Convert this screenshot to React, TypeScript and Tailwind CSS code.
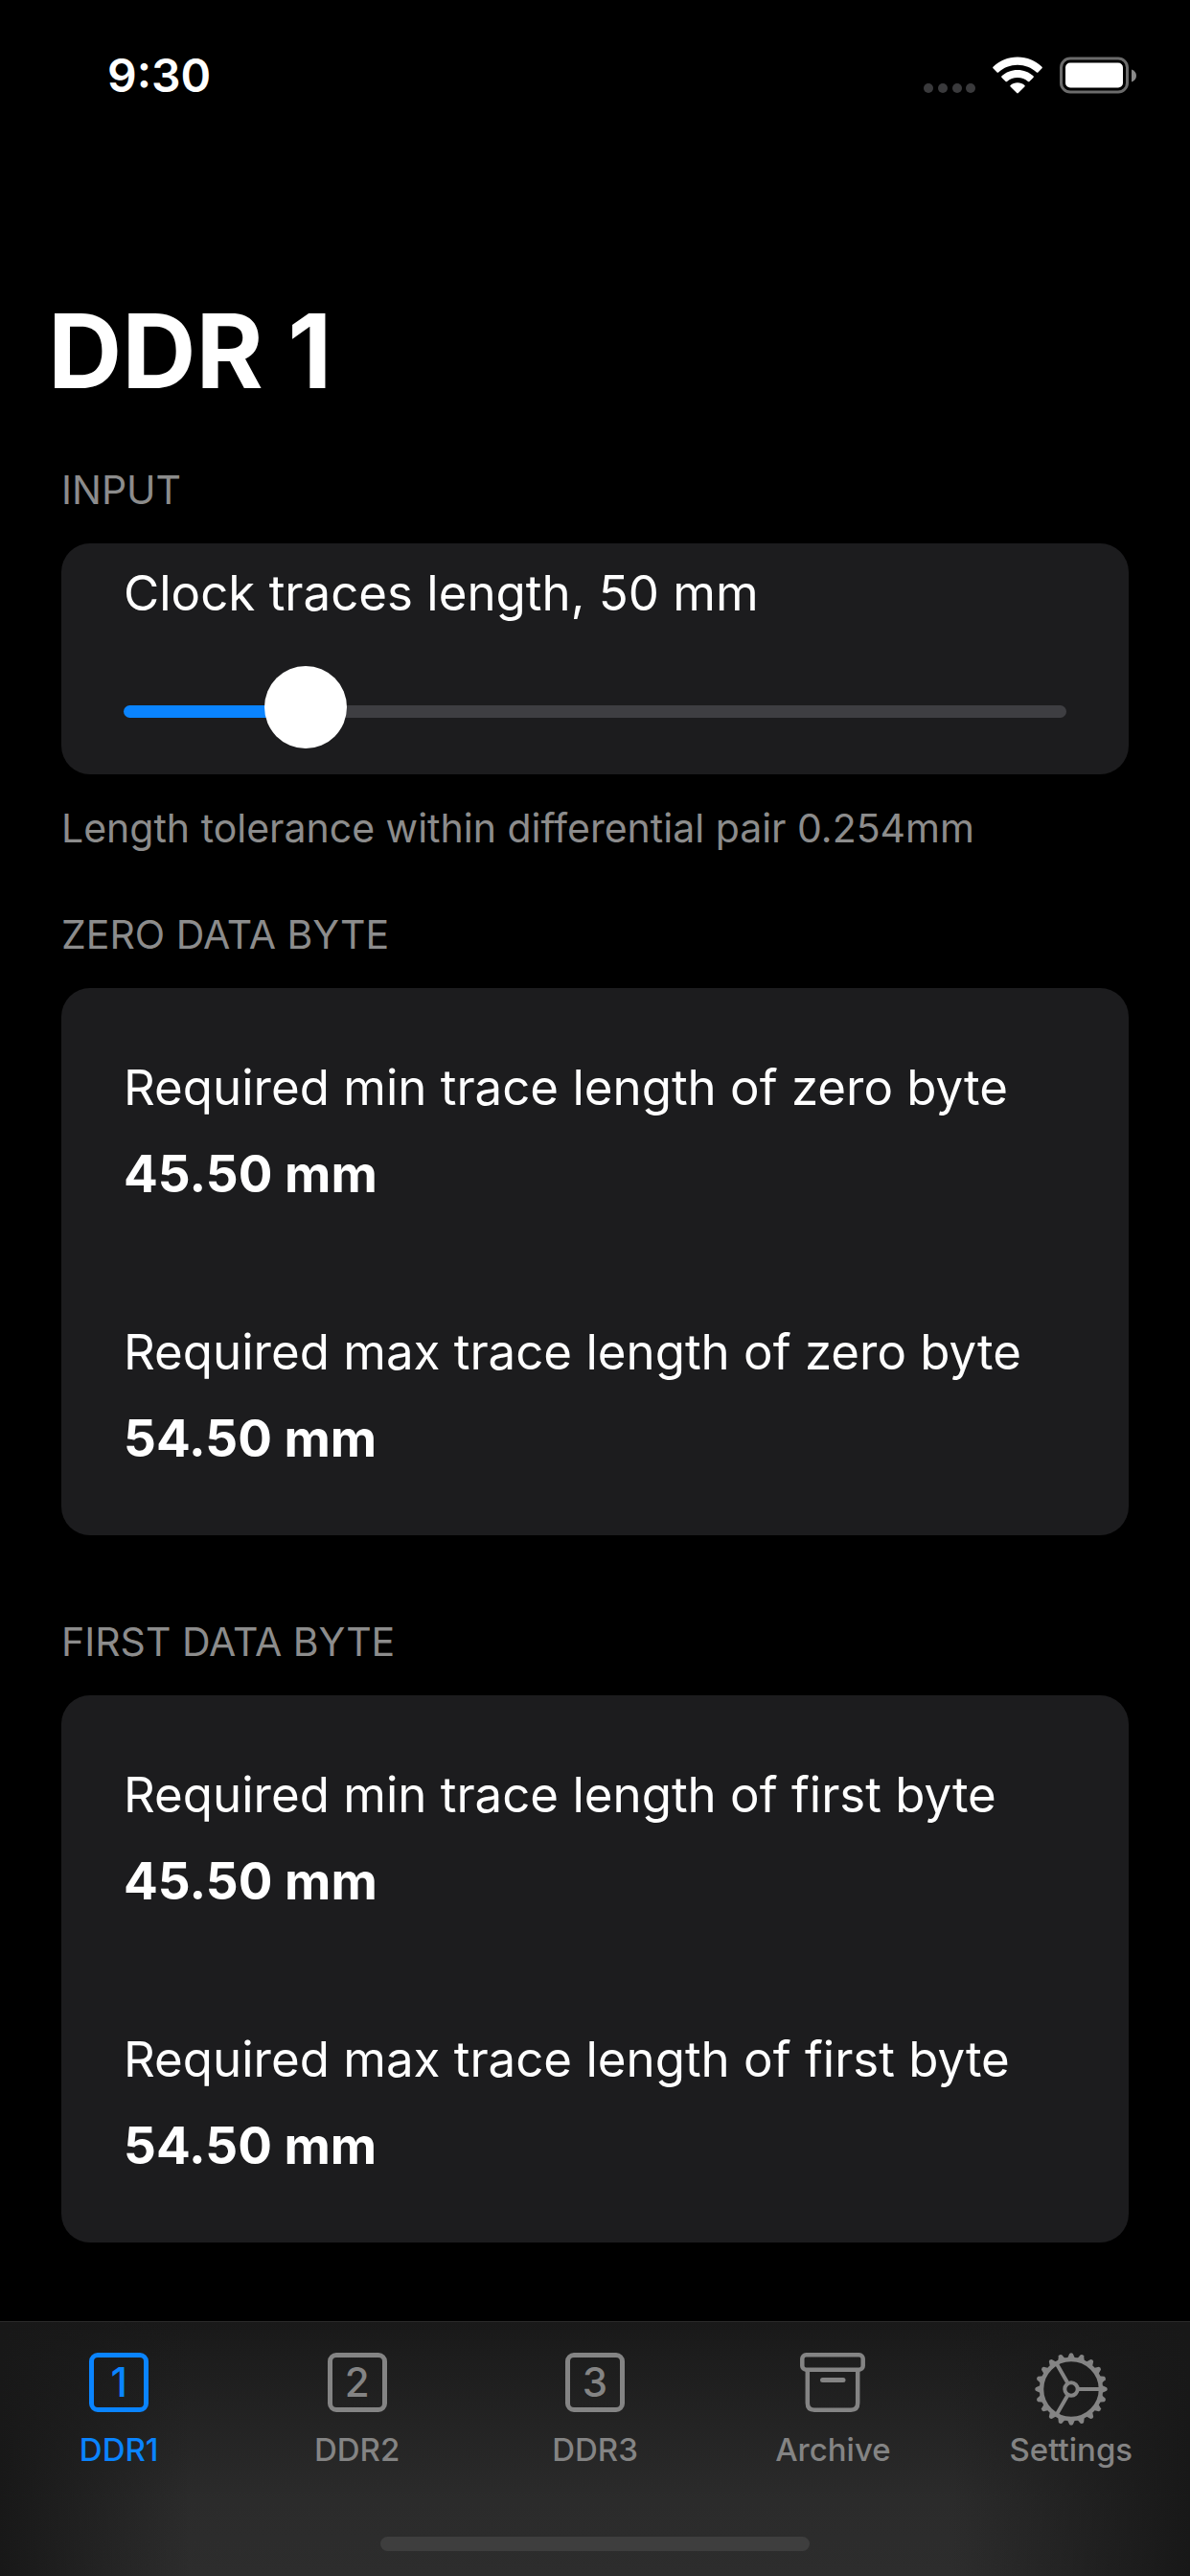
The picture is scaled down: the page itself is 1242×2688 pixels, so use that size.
import { useState, type CSSProperties, type ReactNode } from 'react';

type TabId = 'ddr1' | 'ddr2' | 'ddr3' | 'archive' | 'settings';
type Row = { label: string; value: number };

// ---- trace limits (mm) ----
const MIN_LENGTH = 1;
const MAX_LENGTH = 300;
const BYTE_TOLERANCE = 4.5;
const PAIR_TOLERANCE = 0.254;

const mm = (n: number) => `${n.toFixed(2)} mm`;

// ---------- Status bar ----------
function StatusBar() {
  return (
    <header className="flex h-[158px] items-center justify-between pl-28 pr-14">
      <time className="text-[48px] leading-[60px] font-semibold">9:30</time>
      <div className="flex items-center gap-[18px]">
        <svg className="h-10 w-14" viewBox="0 0 56 40" fill="#3a3a3c" aria-hidden="true">
          <circle cx="7" cy="33" r="5" />
          <circle cx="22" cy="33" r="5" />
          <circle cx="37" cy="33" r="5" />
          <circle cx="51" cy="33" r="5" />
        </svg>
        <svg className="h-10 w-[52px]" viewBox="0 0 52 40" fill="#fff" aria-hidden="true">
          <path d="M26 0.5C36 0.5 45 4.3 51.5 10.7Q52.2 11.5 51.5 12.3L47.4 16.4Q46.7 17.1 45.9 16.4C40.5 11.5 33.5 8.7 26 8.7S11.5 11.5 6.1 16.4Q5.3 17.1 4.6 16.4L0.5 12.3Q-0.2 11.5 0.5 10.7C7 4.3 16 0.5 26 0.5Z" />
          <path d="M26 14C32.4 14 38.2 16.4 42.5 20.3Q43.3 21.1 42.5 21.9L38.4 26Q37.7 26.7 36.9 26C34 23.5 30.2 22 26 22S18 23.5 15.1 26Q14.3 26.7 13.6 26L9.5 21.9Q8.7 21.1 9.5 20.3C13.8 16.4 19.6 14 26 14Z" />
          <path d="M26 27.3C28.8 27.3 31.4 28.3 33.4 29.9Q34.2 30.7 33.4 31.5L26.8 38.1Q26 38.9 25.2 38.1L18.6 31.5Q17.8 30.7 18.6 29.9C20.6 28.3 23.2 27.3 26 27.3Z" />
        </svg>
        <svg className="h-10 w-20" viewBox="0 0 80 40" aria-hidden="true">
          <rect x="1.5" y="2" width="69" height="35" rx="9.5" fill="none" stroke="#6b6b6b" strokeWidth="3" />
          <rect x="6" y="6.5" width="60" height="26" rx="5" fill="#fff" />
          <path d="M75 13.5C78 14.5 80 17 80 20S78 25.5 75 26.5Z" fill="#8a8a8a" />
        </svg>
      </div>
    </header>
  );
}

// ---------- Cards ----------
function Section({ title, footer, children }: { title: string; footer?: string; children: ReactNode }) {
  return (
    <section>
      <h2 className="text-[41px] leading-10 text-[#8c8c8c] uppercase">{title}</h2>
      <div className="mt-9 rounded-[30px] bg-[#1c1c1e] px-[65px]">{children}</div>
      {footer && <p className="mt-9 text-[41px] leading-10 text-[#8c8c8c]">{footer}</p>}
    </section>
  );
}

function Results({ rows }: { rows: Row[] }) {
  return (
    <dl className="flex flex-col gap-[126px] pt-[74px] pb-[71px]">
      {rows.map(r => (
        <div key={r.label} className="flex flex-col gap-[30px]">
          <dt className="text-[51px] leading-[60px]">{r.label}</dt>
          <dd className="text-[53px] leading-[60px] font-bold">{mm(r.value)}</dd>
        </div>
      ))}
    </dl>
  );
}

function LengthSlider({ value, onChange }: { value: number; onChange: (n: number) => void }) {
  const fill = ((value - MIN_LENGTH) / (MAX_LENGTH - MIN_LENGTH)) * 100;
  return (
    <div className="pt-[22px] pb-[23px]">
      <label htmlFor="clock-length" className="block text-[51px] leading-[60px]">
        Clock traces length, {value} mm
      </label>
      <input
        id="clock-length"
        type="range"
        min={MIN_LENGTH}
        max={MAX_LENGTH}
        value={value}
        onChange={e => onChange(Number(e.target.value))}
        style={{ '--fill': `${fill}%` } as CSSProperties}
        className="mt-[50px] block h-[86px] w-full cursor-pointer appearance-none bg-transparent [&::-webkit-slider-runnable-track]:h-[13px] [&::-webkit-slider-runnable-track]:rounded-full [&::-webkit-slider-runnable-track]:bg-[linear-gradient(to_right,#0a84ff_var(--fill),#3e3e42_var(--fill))] [&::-webkit-slider-thumb]:-mt-[41px] [&::-webkit-slider-thumb]:size-[86px] [&::-webkit-slider-thumb]:appearance-none [&::-webkit-slider-thumb]:rounded-full [&::-webkit-slider-thumb]:bg-white"
      />
    </div>
  );
}

// ---------- Tab icons ----------
function NumberIcon({ n }: { n: number }) {
  return (
    <span className="flex size-[62px] items-center justify-center rounded-[9px] border-5 border-current text-[42px] leading-none font-medium" aria-hidden="true">
      {n}
    </span>
  );
}

function ArchiveIcon() {
  return (
    <svg className="h-[62px] w-[68px]" viewBox="0 0 68 62" fill="none" stroke="currentColor" strokeWidth="4.5" aria-hidden="true">
      <rect x="2.3" y="2.3" width="63.4" height="15.4" rx="4" />
      <path d="M7.8 18V52.5Q7.8 59.7 15 59.7H53Q60.2 59.7 60.2 52.5V18" />
      <path d="M23.5 28.5H45" strokeWidth="5" strokeLinecap="round" />
    </svg>
  );
}

const TEETH = Array.from({ length: 20 }, (_, i) => i * 18);

function SettingsIcon() {
  return (
    <svg className="size-[76px]" viewBox="-38 -38 76 76" fill="none" stroke="currentColor" strokeWidth="4" aria-hidden="true">
      <circle r="31" strokeWidth="4.5" />
      <circle r="6.7" />
      <path d="M8 0H31M-4 -7L-15.5 -27M-4 7L-15.5 27" />
      {TEETH.map(deg => (
        <path key={deg} d="M31 -4.5L37 -1.8Q38.5 0 37 1.8L31 4.5Z" fill="currentColor" stroke="none" transform={`rotate(${deg})`} />
      ))}
    </svg>
  );
}

const TABS: { id: TabId; label: string; icon: ReactNode }[] = [
  { id: 'ddr1', label: 'DDR1', icon: <NumberIcon n={1} /> },
  { id: 'ddr2', label: 'DDR2', icon: <NumberIcon n={2} /> },
  { id: 'ddr3', label: 'DDR3', icon: <NumberIcon n={3} /> },
  { id: 'archive', label: 'Archive', icon: <ArchiveIcon /> },
  { id: 'settings', label: 'Settings', icon: <SettingsIcon /> },
];

function TabBar({ active, onSelect }: { active: TabId; onSelect: (id: TabId) => void }) {
  return (
    <nav className="sticky bottom-0 border-t border-[#2a2a2a] bg-[linear-gradient(to_right,#181818,transparent_16%,transparent_80%,#181818),linear-gradient(to_bottom,#191919,#2b2b2b_70%,#2d2d2d)] pt-8 pb-[26px]">
      <div className="grid grid-cols-5">
        {TABS.map(t => (
          <button
            key={t.id}
            type="button"
            aria-current={active === t.id ? 'page' : undefined}
            onClick={() => onSelect(t.id)}
            className={`flex cursor-pointer flex-col items-center ${active === t.id ? 'text-[#0a84ff]' : 'text-[#848484]'}`}
          >
            <span className="flex h-[81px] items-start">{t.icon}</span>
            <span className="text-[33px] leading-10 font-medium">{t.label}</span>
          </button>
        ))}
      </div>
      {/* home indicator */}
      <div className="mx-auto mt-[71px] h-[15px] w-[36%] rounded-full bg-[#3e3e3e]" />
    </nav>
  );
}

export default function App() {
  const [tab, setTab] = useState<TabId>('ddr1');
  const [length, setLength] = useState(50);

  const min = length - BYTE_TOLERANCE;
  const max = length + BYTE_TOLERANCE;

  return (
    <div className="flex min-h-screen flex-col bg-black font-['Inter','Liberation_Sans',sans-serif] text-white">
      <StatusBar />
      <main className="flex-1 px-16 pt-[148px] pb-[78px]">
        <h1 className="-ml-[14px] text-[107px] leading-[120px] font-bold">DDR 1</h1>
        <div className="mt-[65px]">
          <Section title="Input" footer={`Length tolerance within differential pair ${PAIR_TOLERANCE}mm`}>
            <LengthSlider value={length} onChange={setLength} />
          </Section>
        </div>
        <div className="mt-[71px] flex flex-col gap-[91px]">
          <Section title="Zero data byte">
            <Results
              rows={[
                { label: 'Required min trace length of zero byte', value: min },
                { label: 'Required max trace length of zero byte', value: max },
              ]}
            />
          </Section>
          <Section title="First data byte">
            <Results
              rows={[
                { label: 'Required min trace length of first byte', value: min },
                { label: 'Required max trace length of first byte', value: max },
              ]}
            />
          </Section>
        </div>
      </main>
      <TabBar active={tab} onSelect={setTab} />
    </div>
  );
}
